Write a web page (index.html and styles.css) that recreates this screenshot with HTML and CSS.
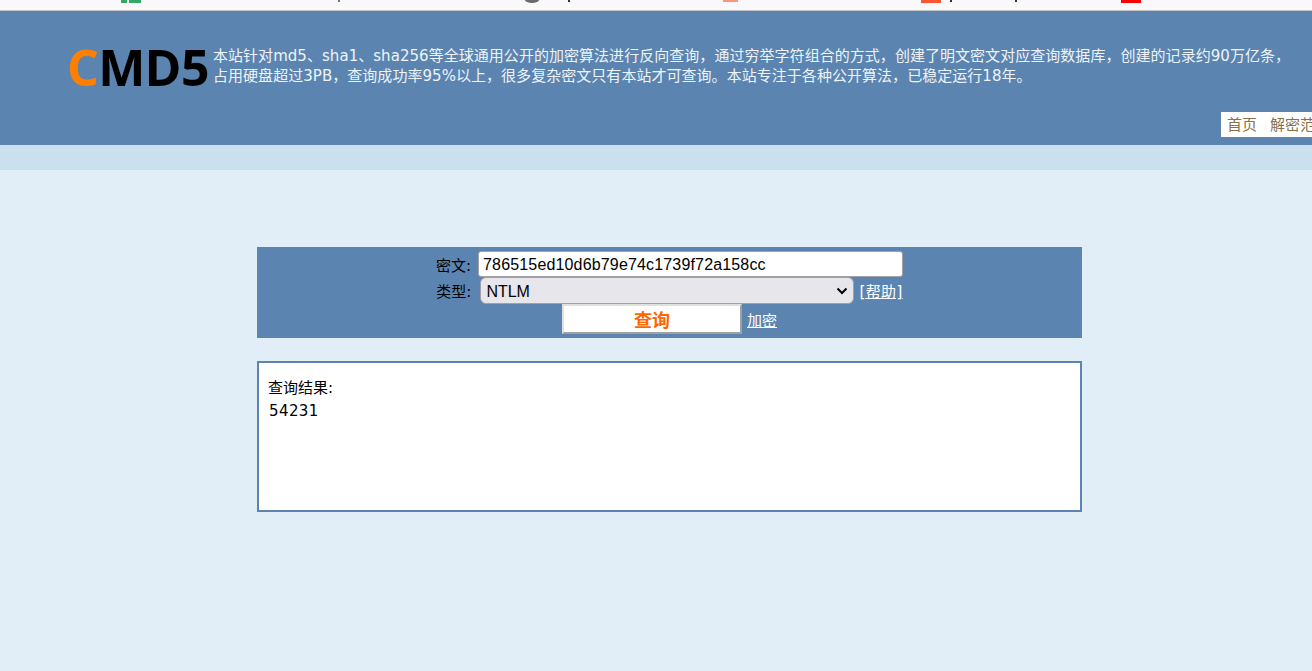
FILE: index.html
```html
<!DOCTYPE html>
<html lang="zh-CN">
<head>
<meta charset="utf-8">
<title>CMD5</title>
<link rel="stylesheet" href="styles.css">
</head>
<body>
<div class="topbar">
  <div class="bookmark"><span class="fav fav-green"></span></div>
  <div class="bookmark"><span class="tick tick-a"></span></div>
  <div class="bookmark"><span class="fav fav-gray"></span><span class="tick tick-b"></span></div>
  <div class="bookmark"><span class="fav fav-salmon"></span></div>
  <div class="bookmark"><span class="fav fav-orange"></span><span class="tick tick-c"></span><span class="tick tick-d"></span></div>
  <div class="bookmark"><span class="fav fav-red"></span></div>
</div>
<header class="header">
  <div class="brand">
    <div class="logo"><span class="logo-c">C</span>MD5</div>
    <p class="intro">本站针对md5、sha1、sha256等全球通用公开的加密算法进行反向查询，通过穷举字符组合的方式，创建了明文密文对应查询数据库，创建的记录约90万亿条，占用硬盘超过3PB，查询成功率95%以上，很多复杂密文只有本站才可查询。本站专注于各种公开算法，已稳定运行18年。</p>
  </div>
  <nav class="nav"><a href="#">首页</a><a href="#">解密范围</a><a href="#">批量解密</a></nav>
</header>
<div class="strip"></div>
<main class="main">
  <form class="panel">
    <div class="row">
      <label class="label" for="cipher">密文:</label>
      <input class="cipher" id="cipher" type="text" value="786515ed10d6b79e74c1739f72a158cc">
    </div>
    <div class="row">
      <label class="label label-type" for="type">类型:</label>
      <select class="type" id="type"><option>NTLM</option></select>
      <a class="link link-help" href="#">[帮助]</a>
    </div>
    <div class="row">
      <button class="submit" type="button">查询</button>
      <a class="link" href="#">加密</a>
    </div>
  </form>
  <section class="result">
    <div class="result-title">查询结果:</div>
    <div class="result-value">54231</div>
  </section>
</main>
</body>
</html>
```
FILE: styles.css
```css
* { box-sizing: border-box; }
html, body { margin: 0; height: 100%; }
body {
  background: #e1eef7;
  font-family: "DejaVu Sans", "Noto Sans CJK SC", sans-serif;
  font-size: 15px;
  overflow: hidden;
}
.topbar {
  display: flex;
  height: 11px;
  padding-left: 121px;
  background: #f9f9fb;
  border-bottom: 1px solid #c4c4c6;
  overflow: hidden;
}
.bookmark { display: flex; flex: 0 0 200px; align-items: flex-start; }
.fav { display: block; }
.fav-green { width: 20px; height: 3px; background: linear-gradient(90deg, #35a862 0 6px, #f9f9fb 6px 8px, #35a862 8px); }
.fav-gray { width: 14px; height: 3px; margin-left: 4px; border-radius: 0 0 7px 7px / 0 0 3px 3px; background: #6b6b6d; }
.fav-salmon { width: 15px; height: 2px; margin-left: 2px; background: #ff9277; }
.fav-orange { width: 20px; height: 3px; background: #ff5632; }
.fav-red { width: 20px; height: 3px; background: #fe0000; }
.tick { display: block; width: 2px; height: 2px; background: #333; }
.tick-a { margin-left: 17px; background: #777; }
.tick-b { margin-left: 29px; }
.tick-c { margin-left: 9px; }
.tick-d { margin-left: 63px; }
.header {
  height: 134px;
  background: #5b85b0;
  overflow: hidden;
}
.brand {
  display: flex;
  align-items: flex-start;
  height: 101px;
  padding: 26px 15px 0 67px;
}
.logo {
  flex: 0 0 146px;
  color: #000;
  font-family: "Open Sans", sans-serif;
  font-size: 50px;
  font-weight: 700;
  line-height: 60px;
  letter-spacing: -0.7px;
  white-space: nowrap;
}
.logo-c { color: #ff8000; }
.intro {
  flex: 1;
  margin: 9px 0 0;
  color: #eef3f8;
  line-height: 20px;
  letter-spacing: 0.04px;
}
.nav {
  display: flex;
  gap: 13px;
  width: 300px;
  height: 25px;
  margin-left: 1221px;
  padding-left: 6px;
  background: #fff;
  line-height: 26px;
  white-space: nowrap;
}
.nav a { color: #8b6f47; text-decoration: none; }
.strip { height: 25px; background: #cbe0ef; }
.main { padding: 77px 0 0 257px; }
.panel {
  width: 825px;
  height: 91px;
  padding-top: 4px;
  background: #5b85b0;
}
.row {
  display: flex;
  justify-content: center;
  align-items: center;
}
.label { color: #000; margin-right: 7px; white-space: nowrap; }
.label-type { margin-right: 9px; }
.cipher {
  width: 425px;
  height: 26px;
  padding: 2px 4px 0;
  border: 1px solid #a0a0a6;
  border-radius: 3px;
  background: #fff;
  color: #000;
  font-family: "Liberation Sans", sans-serif;
  font-size: 16px;
  letter-spacing: 0.16px;
}
.type {
  appearance: none;
  width: 374px;
  height: 27px;
  padding: 2px 2px 0 5px;
  border: 1px solid #a0a0a6;
  border-radius: 6px;
  background-color: #e7e6eb;
  background-image: url("data:image/svg+xml,%3Csvg xmlns='http://www.w3.org/2000/svg' width='12' height='8'%3E%3Cpath d='M1.5 1.5 6 6l4.5-4.5' fill='none' stroke='%23000' stroke-width='2'/%3E%3C/svg%3E");
  background-repeat: no-repeat;
  background-position: 355px 9px;
  color: #000;
  font-family: "Liberation Sans", sans-serif;
  font-size: 16px;
}
.link { color: #fff; text-decoration: underline; margin-left: 5px; white-space: nowrap; }
.link-help { letter-spacing: 0.4px; }
.submit {
  width: 180px;
  height: 30px;
  padding: 0;
  border: 2px solid;
  border-color: #e0e0e0 #a0a0a0 #a0a0a0 #e0e0e0;
  background: #fff;
  color: #ff6600;
  font-family: "Noto Sans CJK SC", sans-serif;
  font-size: 18px;
  font-weight: 700;
  cursor: pointer;
}
.result {
  width: 825px;
  height: 151px;
  margin-top: 23px;
  padding: 15px 9px 0;
  border: 2px solid #5b85b0;
  background: #fff;
}
.result-title { color: #000; line-height: 20px; }
.result-value { color: #000; line-height: 26px; padding-left: 1px; letter-spacing: 0.4px; }
```
